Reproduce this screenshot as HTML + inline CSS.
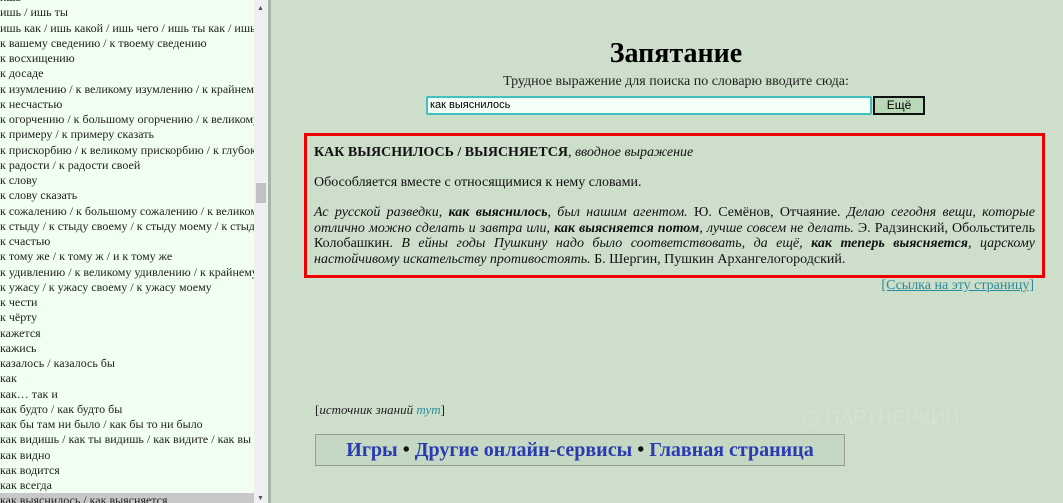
<!DOCTYPE html>
<html><head><meta charset="utf-8"><style>
html,body{margin:0;padding:0;width:1063px;height:503px;overflow:hidden;font-family:"Liberation Serif",serif;}
#left{position:absolute;left:0;top:0;width:268px;height:503px;background:#f0fff0;border-right:3px solid #a8b4a8;overflow:hidden;}
#list{position:absolute;left:0;top:-10px;width:254px;font-size:12px;color:#222;}
#list div{height:15.25px;line-height:15.25px;white-space:nowrap;overflow:hidden;}
#list div.sel{background:#c8c8c8;}
#sb{position:absolute;left:254px;top:0;width:14px;height:503px;background:#f0f0f0;}
#thumb{position:absolute;left:256px;top:183px;width:10px;height:20px;background:#c1c1c1;}
#right{position:absolute;left:271px;top:0;width:792px;height:503px;background:#cddfcb;}
h1{position:absolute;left:0;width:810px;text-align:center;top:38px;margin:0;font-size:28px;line-height:32px;}
.sub{position:absolute;left:0;width:810px;text-align:center;top:74px;font-size:14px;color:#222;}
#inp{position:absolute;left:155px;top:96px;width:440px;height:15px;border:2px solid #40c0c0;background:#f4fff8;font-family:"Liberation Sans",sans-serif;font-size:11px;line-height:15px;padding-left:2px;border-radius:2px;}
#btn{position:absolute;left:602px;top:96px;width:48px;height:15px;border:2px solid #111;background:#b8d8b8;font-family:"Liberation Sans",sans-serif;font-size:12px;text-align:center;line-height:15px;}
#box{position:absolute;left:33px;top:133px;width:721px;height:139px;border:3px solid #e00;padding:0 7px;font-size:14px;color:#111;}
#box p{margin:0;}
.j{text-align:justify;line-height:15.5px;}
.lnk{position:absolute;right:29px;top:278px;font-size:14px;color:#2a8a9a;text-decoration:underline;}
.src{position:absolute;left:44px;top:402px;font-size:13px;color:#222;}
.src a{color:#2a8a9a;}
#nav{position:absolute;left:44px;top:434px;width:528px;height:30px;border:1px solid #999;background:#c4d8c4;text-align:center;font-size:20px;font-weight:bold;line-height:31px;color:#111;}
#nav span{color:#2a3ab0;}
.wm{position:absolute;left:530px;top:405px;color:#d4e2d3;font-family:"Liberation Sans",sans-serif;font-size:20px;}
</style></head><body>
<div id="left"><div id="list">
<div>ишь</div>
<div>ишь / ишь ты</div>
<div>ишь как / ишь какой / ишь чего / ишь ты как / ишь</div>
<div>к вашему сведению / к твоему сведению</div>
<div>к восхищению</div>
<div>к досаде</div>
<div>к изумлению / к великому изумлению / к крайнему</div>
<div>к несчастью</div>
<div>к огорчению / к большому огорчению / к великому</div>
<div>к примеру / к примеру сказать</div>
<div>к прискорбию / к великому прискорбию / к глубокому</div>
<div>к радости / к радости своей</div>
<div>к слову</div>
<div>к слову сказать</div>
<div>к сожалению / к большому сожалению / к великому</div>
<div>к стыду / к стыду своему / к стыду моему / к стыду</div>
<div>к счастью</div>
<div>к тому же / к тому ж / и к тому же</div>
<div>к удивлению / к великому удивлению / к крайнему</div>
<div>к ужасу / к ужасу своему / к ужасу моему</div>
<div>к чести</div>
<div>к чёрту</div>
<div>кажется</div>
<div>кажись</div>
<div>казалось / казалось бы</div>
<div>как</div>
<div>как… так и</div>
<div>как будто / как будто бы</div>
<div>как бы там ни было / как бы то ни было</div>
<div>как видишь / как ты видишь / как видите / как вы</div>
<div>как видно</div>
<div>как водится</div>
<div>как всегда</div>
<div class="sel">как выяснилось / как выясняется</div>
</div><div id="sb"></div><div id="thumb"></div>
<div style="position:absolute;left:257px;top:4px;font-size:7px;color:#555;">▲</div>
<div style="position:absolute;left:257px;top:494px;font-size:7px;color:#555;">▼</div>
</div>
<div id="right">
<h1>Запятание</h1>
<div class="sub">Трудное выражение для поиска по словарю вводите сюда:</div>
<div id="inp">как выяснилось</div>
<div id="btn">Ещё</div>
<div id="box">
<p style="margin-top:9px;"><b>КАК ВЫЯСНИЛОСЬ / ВЫЯСНЯЕТСЯ</b>, <i>вводное выражение</i></p>
<p style="margin-top:14px;">Обособляется вместе с относящимися к нему словами.</p>
<p class="j" style="margin-top:14px;"><i>Ас русской разведки, <b>как выяснилось</b>, был нашим агентом.</i> Ю. Семёнов, Отчаяние. <i>Делаю сегодня вещи, которые отлично можно сделать и завтра или, <b>как выясняется потом</b>, лучше совсем не делать.</i> Э. Радзинский, Обольститель Колобашкин. <i>В ейны годы Пушкину надо было соответствовать, да ещё, <b>как теперь выясняется</b>, царскому настойчивому искательству противостоять.</i> Б. Шергин, Пушкин Архангелогородский.</p>
</div>
<div class="lnk">[Ссылка на эту страницу]</div>
<div class="wm">▢ ПАРТНЕРКИН</div>
<div class="src">[<i>источник знаний <a>тут</a></i>]</div>
<div id="nav"><span>Игры</span> • <span>Другие онлайн-сервисы</span> • <span>Главная страница</span></div>
</div>
</body></html>
